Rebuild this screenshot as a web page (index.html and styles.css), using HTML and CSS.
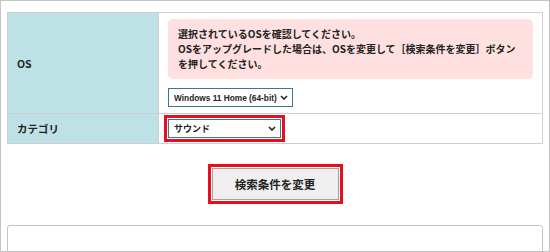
FILE: index.html
```html
<!DOCTYPE html>
<html lang="ja">
<head>
    <meta charset="UTF-8">
    <meta name="viewport" content="width=device-width, initial-scale=1.0">
    <title>検索条件</title>
    <link rel="stylesheet" href="styles.css">
</head>
<body>

    <div class="frame">
        <table class="search">
            <colgroup>
                <col class="label-col">
                <col>
            </colgroup>
            <tr>
                <th>OS</th>
                <td class="os-cell">
                    <div class="notice">
                        選択されているOSを確認してください。<br>
                        OSをアップグレードした場合は、OSを変更して［検索条件を変更］ボタン<br>
                        を押してください。
                    </div>
                    <span class="select-wrap">
                        <select class="select os-select">
                            <option>Windows 11 Home (64-bit)</option>
                        </select>
                        <svg class="chevron" viewBox="0 0 8 5" width="8" height="5"><path d="M1 1 L4 4 L7 1" fill="none" stroke="#222" stroke-width="1.6"/></svg>
                    </span>
                </td>
            </tr>
            <tr>
                <th>カテゴリ</th>
                <td class="cat-cell">
                    <span class="select-wrap marked">
                        <select class="select cat-select">
                            <option>サウンド</option>
                        </select>
                        <svg class="chevron" viewBox="0 0 8 5" width="8" height="5"><path d="M1 1 L4 4 L7 1" fill="none" stroke="#222" stroke-width="1.6"/></svg>
                    </span>
                </td>
            </tr>
        </table>

        <div class="actions">
            <button class="change-btn marked">検索条件を変更</button>
        </div>

        <div class="results"></div>
    </div>

</body>
</html>
```

FILE: styles.css
```css
body {
    margin: 0;
    font-family: "Noto Sans CJK JP", "Liberation Sans", sans-serif;
    color: #222;
    background: #fff;
}
.frame {
    width: 550px;
    height: 252px;
    box-sizing: border-box;
    border: 1px solid #c4c4c4;
    padding: 11px 6px 0 6px;
    overflow: hidden;
}
.search {
    width: 536px;
    border-collapse: collapse;
    table-layout: fixed;
}
.label-col {
    width: 151px;
}
.search th,
.search td {
    border: 1px solid #cfcfcf;
}
.search th {
    background-color: #bee1e6;
    text-align: left;
    padding: 0 9px;
    font-size: 10.5px;
    font-weight: bold;
}
.os-cell {
    padding: 6px 9px 6px 9px;
}
.cat-cell {
    padding: 5px 9px 5px 9px;
}
.notice {
    background-color: #ffe0e0;
    border-radius: 5px;
    padding: 7px 6px 8px 10px;
    font-size: 10px;
    line-height: 15px;
    font-weight: bold;
    margin-bottom: 9px;
}
.select-wrap {
    position: relative;
    display: block;
    width: fit-content;
}
.select {
    appearance: none;
    -webkit-appearance: none;
    display: block;
    height: 19px;
    box-sizing: border-box;
    border: 1px solid #3b7891;
    border-radius: 0;
    background: #fff;
    font-family: "Liberation Sans", "Noto Sans CJK JP", sans-serif;
    font-weight: bold;
    color: #222;
}
.os-select {
    width: 125px;
    font-size: 8.3px;
    padding: 0 10px 0 5px;
}
.cat-select {
    width: 113px;
    font-family: "Noto Sans CJK JP", sans-serif;
    font-size: 9px;
    padding: 0 16px 0 5px;
}
.chevron {
    position: absolute;
    right: 5px;
    top: 7px;
    pointer-events: none;
}
.marked {
    outline: 3px solid #e60f1e;
    outline-offset: 1px;
}
.actions {
    display: flex;
    justify-content: center;
    padding: 24px 0 25px 0;
}
.change-btn {
    width: 127px;
    height: 32px;
    background-color: #efefef;
    border: 1px solid #a3a3a3;
    border-radius: 0;
    font-family: "Noto Sans CJK JP", sans-serif;
    font-size: 11.5px;
    font-weight: bold;
    color: #222;
    cursor: pointer;
}
.results {
    height: 40px;
    border: 1px solid #c4c4c4;
    border-radius: 3px 3px 0 0;
}
```
